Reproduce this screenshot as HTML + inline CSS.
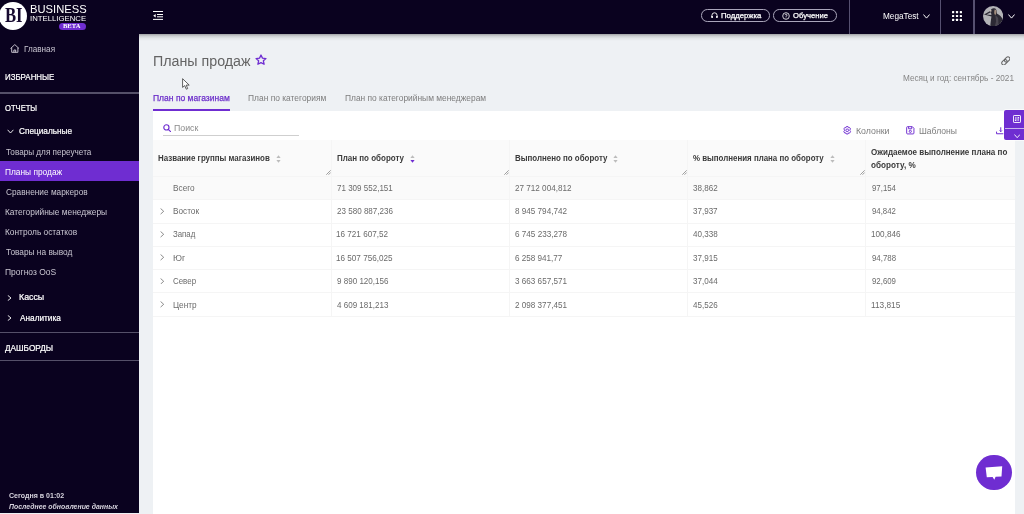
<!DOCTYPE html>
<html lang="ru">
<head>
<meta charset="utf-8">
<title>Планы продаж</title>
<style>
*{box-sizing:border-box;margin:0;padding:0}
html,body{width:1024px;height:514px;overflow:hidden}
body{font-family:'Liberation Sans',sans-serif;background:#eef1f4;position:relative}
.a{position:absolute}
.t{position:absolute;white-space:pre;line-height:1;transform-origin:0 50%}
</style>
</head>
<body>
<!-- backgrounds -->
<div class="a" style="left:139px;top:0;width:885px;height:34px;background:#0a021f"></div>
<div class="a" style="left:139px;top:34px;width:885px;height:7px;background:linear-gradient(180deg,rgba(0,0,0,.33),rgba(0,0,0,.14) 30%,rgba(0,0,0,.05) 62%,rgba(0,0,0,0))"></div>
<div class="a" style="left:0;top:0;width:139px;height:512.8px;background:#0a021f"></div>

<!-- logo -->
<div class="a" style="left:-0.6px;top:2px;width:27.8px;height:27.8px;border-radius:50%;background:#fff"></div>
<div class="a" style="left:58.9px;top:22.8px;width:26.9px;height:7.2px;border-radius:3.6px;background:#6f2dd1"></div>

<!-- home icon -->
<svg class="a" style="left:9.7px;top:44.4px" width="9.6" height="9" viewBox="0 0 9.6 9" fill="none" stroke="#d6d3dd" stroke-width="0.9" stroke-linejoin="round"><path d="M0.5 4.6 L4.8 0.6 L9.1 4.6 M1.7 3.7 V8.3 H7.9 V3.7 M3.9 8.3 V6 H5.7 V8.3"/></svg>

<!-- sidebar separators -->
<div class="a" style="left:0;top:92.4px;width:139px;height:1.2px;background:#555069"></div>
<div class="a" style="left:0;top:331.5px;width:139px;height:1.2px;background:#555069"></div>
<div class="a" style="left:0;top:360.2px;width:139px;height:1.2px;background:#555069"></div>

<!-- active menu item -->
<div class="a" style="left:0;top:160.7px;width:139px;height:20.5px;background:#6f2dd1"></div>

<!-- sidebar chevrons -->
<svg class="a" style="left:6.5px;top:129px" width="7" height="5" viewBox="0 0 7 5" fill="none" stroke="#fff" stroke-width="0.9"><path d="M0.6 0.8 L3.5 4 L6.4 0.8"/></svg>
<svg class="a" style="left:7px;top:295px" width="5" height="6" viewBox="0 0 5 6" fill="none" stroke="#fff" stroke-width="0.9"><path d="M0.8 0.4 L4 3 L0.8 5.6"/></svg>
<svg class="a" style="left:7px;top:315.4px" width="5" height="6" viewBox="0 0 5 6" fill="none" stroke="#fff" stroke-width="0.9"><path d="M0.8 0.4 L4 3 L0.8 5.6"/></svg>

<!-- hamburger -->
<svg class="a" style="left:153px;top:11px" width="10.2" height="9" viewBox="0 0 10.2 9" fill="none" stroke="#fff" stroke-width="1"><path d="M0 0.5 H10.2 M4 3.5 H10.2 M4 5.8 H10.2 M0 8.4 H10.2"/><path d="M0.2 4.65 L2.7 2.9 V6.4 Z" fill="#fff" stroke="none"/></svg>

<!-- top buttons -->
<div class="a" style="left:701.2px;top:9.2px;width:68.4px;height:12.5px;border:1px solid #aaa6bb;border-radius:6.3px"></div>
<svg class="a" style="left:711px;top:12.3px" width="7" height="7" viewBox="0 0 7 7" fill="none" stroke="#fff" stroke-width="0.9"><path d="M0.9 5 V3.4 A2.6 2.6 0 0 1 6.1 3.4 V5"/><path d="M1.1 3.9 V6 M5.9 3.9 V6" stroke-width="1.5"/></svg>
<div class="a" style="left:772.6px;top:9.2px;width:64.4px;height:12.5px;border:1px solid #aaa6bb;border-radius:6.3px"></div>
<svg class="a" style="left:781.7px;top:12px" width="8" height="8" viewBox="0 0 8 8" fill="none" stroke="#fff" stroke-width="0.8"><circle cx="4" cy="4" r="3.3"/><path d="M3 3.2 A1 1 0 1 1 4 4.2 V4.9 M4 5.6 V6.2" stroke-width="0.7"/></svg>

<!-- top separators -->
<div class="a" style="left:848.6px;top:0;width:1.4px;height:34px;background:#565070"></div>
<div class="a" style="left:939.6px;top:0;width:1.4px;height:34px;background:#565070"></div>
<div class="a" style="left:973.4px;top:0;width:1.4px;height:34px;background:#565070"></div>
<svg class="a" style="left:923.3px;top:14.3px" width="7" height="5" viewBox="0 0 7 5" fill="none" stroke="#fff" stroke-width="1"><path d="M0.4 0.5 L3.5 4.1 L6.6 0.5"/></svg>
<svg class="a" style="left:1007.7px;top:14.3px" width="7" height="5" viewBox="0 0 7 5" fill="none" stroke="#fff" stroke-width="1"><path d="M0.4 0.5 L3.5 4.1 L6.6 0.5"/></svg>
<!-- grid icon -->
<svg class="a" style="left:952px;top:10.5px" width="10" height="10" viewBox="0 0 10 10" fill="#fff"><rect x="0" y="0" width="2.2" height="2.2" rx="0.5"/><rect x="3.9" y="0" width="2.2" height="2.2" rx="0.5"/><rect x="7.8" y="0" width="2.2" height="2.2" rx="0.5"/><rect x="0" y="3.9" width="2.2" height="2.2" rx="0.5"/><rect x="3.9" y="3.9" width="2.2" height="2.2" rx="0.5"/><rect x="7.8" y="3.9" width="2.2" height="2.2" rx="0.5"/><rect x="0" y="7.8" width="2.2" height="2.2" rx="0.5"/><rect x="3.9" y="7.8" width="2.2" height="2.2" rx="0.5"/><rect x="7.8" y="7.8" width="2.2" height="2.2" rx="0.5"/></svg>
<!-- avatar -->
<svg class="a" style="left:983.2px;top:5.6px" width="20.2" height="20.2" viewBox="0 0 20 20"><defs><clipPath id="av"><circle cx="10" cy="10" r="10"/></clipPath></defs><g clip-path="url(#av)"><rect width="20" height="20" fill="#b3b3b7"/><path d="M7.2 20 C7.6 16 8 13 8.4 10.4 L1 8.4 L7.6 4.6 C8.2 2.6 9.6 2 11 2.2 C12.8 2.3 13.6 4 13.6 6 L14 7.6 C16.5 8.6 18.6 11 20 14 V20 Z" fill="#2c2934"/><path d="M11.4 3.6 C12.6 3.4 13.3 4.4 13.3 5.6 C13.3 7 12.9 8.3 12.1 8.8 C11.4 8.4 11 7.4 11.1 6 Z" fill="#a08b7c"/><path d="M3.4 8.3 L7.8 6.2 L8.4 8.8 Z" fill="#b3b3b7"/><circle cx="7.6" cy="4.8" r="0.9" fill="#cfc3bb"/><path d="M12.2 9 L13 15 L11.8 20 H15.5 L15 12 Z" fill="#4a4650"/></g></svg>

<!-- title star -->
<svg class="a" style="left:254.6px;top:54px" width="12" height="11.4" viewBox="0 0 11.6 11" fill="none" stroke="#6f2dd1" stroke-width="1.25" stroke-linejoin="round"><path d="M5.8 1 L7.2 4 L10.6 4.4 L8.1 6.6 L8.8 9.9 L5.8 8.3 L2.8 9.9 L3.5 6.6 L1 4.4 L4.4 4 Z"/></svg>
<!-- mouse cursor -->
<svg class="a" style="left:181.6px;top:77.6px" width="8.5" height="12" viewBox="0 0 8.5 12" fill="#fff" stroke="#3a3a3a" stroke-width="0.8" stroke-linejoin="round"><path d="M0.6 0.7 V9.4 L2.7 7.6 L4.3 11.2 L5.7 10.6 L4.2 7.1 H7.2 Z"/></svg>
<!-- link icon -->
<svg class="a" style="left:1000.5px;top:55.5px" width="9.6" height="9.6" viewBox="0 0 9.6 9.6" fill="none" stroke="#666" stroke-width="1.05"><g transform="translate(4.8,4.8) rotate(-45)"><rect x="-5" y="-1.95" width="6.1" height="3.9" rx="1.95"/><rect x="-1.1" y="-1.95" width="6.1" height="3.9" rx="1.95"/></g></svg>

<!-- active tab underline -->
<div class="a" style="left:153px;top:109.3px;width:76.6px;height:1.9px;background:#6f2dd1"></div>

<!-- panel -->
<div class="a" style="left:153px;top:111px;width:862px;height:403px;background:#fff"></div>
<!-- table header bg + first row bg -->
<div class="a" style="left:153px;top:140px;width:862px;height:59.7px;background:#fafafa"></div>
<!-- search -->
<svg class="a" style="left:162.8px;top:123.6px" width="8.6" height="8.6" viewBox="0 0 8.6 8.6" fill="none" stroke="#6f2dd1" stroke-width="1.15"><circle cx="3.4" cy="3.4" r="2.6"/><path d="M5.3 5.3 L8.1 8.1"/></svg>
<div class="a" style="left:163px;top:134.6px;width:136px;height:1px;background:#cfcfcf"></div>
<!-- toolbar icons -->
<svg class="a" style="left:843.3px;top:126.2px" width="8.4" height="8.6" viewBox="0 0 8.4 8.6" fill="none" stroke="#6f2dd1" stroke-width="0.95" stroke-linejoin="round"><path d="M3.3 0.6 H5.1 L5.5 1.7 L6.6 1.5 L7.6 3 L6.9 3.9 V4.7 L7.6 5.6 L6.6 7.1 L5.5 6.9 L5.1 8 H3.3 L2.9 6.9 L1.8 7.1 L0.8 5.6 L1.5 4.7 V3.9 L0.8 3 L1.8 1.5 L2.9 1.7 Z"/><circle cx="4.2" cy="4.3" r="1.35"/></svg>
<svg class="a" style="left:906px;top:126.2px" width="8.6" height="8.6" viewBox="0 0 9 9" fill="none" stroke="#6f2dd1" stroke-width="1" stroke-linejoin="round"><path d="M0.7 1.6 Q0.7 0.7 1.6 0.7 H6.6 L8.3 2.4 V7.4 Q8.3 8.3 7.4 8.3 H1.6 Q0.7 8.3 0.7 7.4 Z"/><path d="M2.7 0.8 V2.9 H6 V0.8"/><circle cx="4.5" cy="5.6" r="1.15"/></svg>
<svg class="a" style="left:995.5px;top:126.6px" width="9.5" height="8" viewBox="0 0 9.5 8" fill="none" stroke="#6f2dd1" stroke-width="1"><path d="M4.75 0.3 V4.6 M3.6 3.5 L4.75 4.7 L5.9 3.5 M0.55 4.6 V6.75 H8.95 V4.6"/></svg>

<!-- table lines -->
<div class="a" style="left:153px;top:176.1px;width:862px;height:0.9px;background:#f5f5f5"></div>
<div class="a" style="left:153px;top:199.3px;width:862px;height:0.9px;background:#f5f5f5"></div>
<div class="a" style="left:153px;top:222.5px;width:862px;height:0.9px;background:#f5f5f5"></div>
<div class="a" style="left:153px;top:245.7px;width:862px;height:0.9px;background:#f5f5f5"></div>
<div class="a" style="left:153px;top:268.9px;width:862px;height:0.9px;background:#f5f5f5"></div>
<div class="a" style="left:153px;top:292.1px;width:862px;height:0.9px;background:#f5f5f5"></div>
<div class="a" style="left:153px;top:315.6px;width:862px;height:0.9px;background:#f5f5f5"></div>
<div class="a" style="left:330.8px;top:140px;width:0.9px;height:176px;background:#f5f5f5"></div>
<div class="a" style="left:508.9px;top:140px;width:0.9px;height:176px;background:#f5f5f5"></div>
<div class="a" style="left:687px;top:140px;width:0.9px;height:176px;background:#f5f5f5"></div>
<div class="a" style="left:865.2px;top:140px;width:0.9px;height:176px;background:#f5f5f5"></div>

<!-- sort icons -->
<svg class="a" style="left:276.2px;top:154.7px" width="5" height="8" viewBox="0 0 4.6 7.8"><path d="M2.3 0.2 L4.4 3 H0.2 Z" fill="#bcbcbc"/><path d="M2.3 7.6 L4.4 4.8 H0.2 Z" fill="#bcbcbc"/></svg>
<svg class="a" style="left:409.7px;top:154.7px" width="5" height="8" viewBox="0 0 4.6 7.8"><path d="M2.3 0.2 L4.4 3 H0.2 Z" fill="#bcbcbc"/><path d="M2.3 7.6 L4.4 4.8 H0.2 Z" fill="#6f2dd1"/></svg>
<svg class="a" style="left:612.6px;top:154.7px" width="5" height="8" viewBox="0 0 4.6 7.8"><path d="M2.3 0.2 L4.4 3 H0.2 Z" fill="#bcbcbc"/><path d="M2.3 7.6 L4.4 4.8 H0.2 Z" fill="#bcbcbc"/></svg>
<svg class="a" style="left:829.6px;top:154.7px" width="5" height="8" viewBox="0 0 4.6 7.8"><path d="M2.3 0.2 L4.4 3 H0.2 Z" fill="#bcbcbc"/><path d="M2.3 7.6 L4.4 4.8 H0.2 Z" fill="#bcbcbc"/></svg>

<!-- resize handles -->
<svg class="a" style="left:325.6px;top:170.4px" width="5" height="5" viewBox="0 0 4.8 4.8" stroke="#7a7a7a" stroke-width="0.7" fill="none"><path d="M0.3 4.5 L4.5 0.3 M2.4 4.5 L4.5 2.4"/></svg>
<svg class="a" style="left:503.7px;top:170.4px" width="5" height="5" viewBox="0 0 4.8 4.8" stroke="#7a7a7a" stroke-width="0.7" fill="none"><path d="M0.3 4.5 L4.5 0.3 M2.4 4.5 L4.5 2.4"/></svg>
<svg class="a" style="left:681.8px;top:170.4px" width="5" height="5" viewBox="0 0 4.8 4.8" stroke="#7a7a7a" stroke-width="0.7" fill="none"><path d="M0.3 4.5 L4.5 0.3 M2.4 4.5 L4.5 2.4"/></svg>
<svg class="a" style="left:860px;top:170.4px" width="5" height="5" viewBox="0 0 4.8 4.8" stroke="#7a7a7a" stroke-width="0.7" fill="none"><path d="M0.3 4.5 L4.5 0.3 M2.4 4.5 L4.5 2.4"/></svg>

<!-- row chevrons -->
<svg class="a" style="left:160px;top:208px" width="4.4" height="6.6" viewBox="0 0 4.4 6.6" fill="none" stroke="#777" stroke-width="0.85"><path d="M0.6 0.5 L3.7 3.3 L0.6 6.1"/></svg>
<svg class="a" style="left:160px;top:231.2px" width="4.4" height="6.6" viewBox="0 0 4.4 6.6" fill="none" stroke="#777" stroke-width="0.85"><path d="M0.6 0.5 L3.7 3.3 L0.6 6.1"/></svg>
<svg class="a" style="left:160px;top:254.4px" width="4.4" height="6.6" viewBox="0 0 4.4 6.6" fill="none" stroke="#777" stroke-width="0.85"><path d="M0.6 0.5 L3.7 3.3 L0.6 6.1"/></svg>
<svg class="a" style="left:160px;top:277.6px" width="4.4" height="6.6" viewBox="0 0 4.4 6.6" fill="none" stroke="#777" stroke-width="0.85"><path d="M0.6 0.5 L3.7 3.3 L0.6 6.1"/></svg>
<svg class="a" style="left:160px;top:301.2px" width="4.4" height="6.6" viewBox="0 0 4.4 6.6" fill="none" stroke="#777" stroke-width="0.85"><path d="M0.6 0.5 L3.7 3.3 L0.6 6.1"/></svg>

<!-- right purple tab -->
<div class="a" style="left:1004.3px;top:109.7px;width:20px;height:30.4px;background:#6f2dd1;border-radius:2px 0 0 2px;box-shadow:0 0 0 0.8px rgba(255,255,255,.85)"></div>
<div class="a" style="left:1005px;top:128.1px;width:19px;height:0.8px;background:#c9b3ee"></div>
<svg class="a" style="left:1012.9px;top:115.2px" width="8" height="8" viewBox="0 0 8 8" fill="none" stroke="#fff" stroke-width="0.9"><rect x="0.5" y="0.5" width="7" height="7" rx="0.6"/><path d="M2.9 1.9 V6 M1.9 4.9 L2.9 6.1 M5.1 6.1 V2 M6.1 3.1 L5.1 1.9"/></svg>
<svg class="a" style="left:1013.8px;top:133.8px" width="6.4" height="4.2" viewBox="0 0 6.4 4.2" fill="none" stroke="#fff" stroke-width="0.9"><path d="M0.4 0.5 L3.2 3.7 L6 0.5"/></svg>

<!-- chat bubble -->
<div class="a" style="left:976.3px;top:454.7px;width:35.4px;height:35.4px;border-radius:50%;background:#6f2dd1"></div>
<svg class="a" style="left:985.2px;top:466.2px" width="18" height="15" viewBox="0 0 18 15" fill="#fff"><path d="M0.6 1.4 L17.2 0.3 L16.5 10.4 L10.6 10.7 L9.3 13.8 L7.6 10.9 L1.8 11.2 Z"/></svg>

<div id="tx" style="position:absolute;left:0;top:0;width:1024px;height:514px;will-change:transform">
<div class="t" style="left:4.91px;top:5px;font-family:'Liberation Serif',serif;font-size:21px;font-weight:bold;color:#170a30;transform:scaleX(0.7926)">BI</div>
<div class="t" style="left:29.82px;top:5px;font-family:'Liberation Sans',sans-serif;font-size:10.4px;color:#fff;transform:scaleX(1.0775)">BUSINESS</div>
<div class="t" style="left:30.21px;top:15px;font-family:'Liberation Sans',sans-serif;font-size:7.6px;color:#fff;transform:scaleX(1.0228)">INTELLIGENCE</div>
<div class="t" style="left:63.33px;top:23px;font-family:'Liberation Serif',serif;font-size:6.2px;font-weight:bold;color:#fff;transform:scaleX(1.0591)">BETA</div>
<div class="t" style="left:24.39px;top:45px;font-family:'Liberation Sans',sans-serif;font-size:8.5px;color:#c9c6d1;transform:scaleX(0.9595)">Главная</div>
<div class="t" style="left:4.93px;top:73px;font-family:'Liberation Sans',sans-serif;font-size:8.7px;color:#fff;-webkit-text-stroke:0.22px #fff;transform:scaleX(0.9088)">ИЗБРАННЫЕ</div>
<div class="t" style="left:5.49px;top:104px;font-family:'Liberation Sans',sans-serif;font-size:8.7px;color:#fff;-webkit-text-stroke:0.22px #fff;transform:scaleX(0.8753)">ОТЧЕТЫ</div>
<div class="t" style="left:19.44px;top:127px;font-family:'Liberation Sans',sans-serif;font-size:8.7px;color:#fff;-webkit-text-stroke:0.22px #fff;transform:scaleX(0.9498)">Специальные</div>
<div class="t" style="left:5.72px;top:148px;font-family:'Liberation Sans',sans-serif;font-size:8.7px;color:#c9c6d1;transform:scaleX(0.9398)">Товары для переучета</div>
<div class="t" style="left:5.39px;top:168px;font-family:'Liberation Sans',sans-serif;font-size:8.7px;color:#fff;transform:scaleX(0.9609)">Планы продаж</div>
<div class="t" style="left:5.61px;top:188px;font-family:'Liberation Sans',sans-serif;font-size:8.7px;color:#c9c6d1;transform:scaleX(0.9533)">Сравнение маркеров</div>
<div class="t" style="left:5.38px;top:208px;font-family:'Liberation Sans',sans-serif;font-size:8.7px;color:#c9c6d1;transform:scaleX(0.9628)">Категорийные менеджеры</div>
<div class="t" style="left:5.39px;top:228px;font-family:'Liberation Sans',sans-serif;font-size:8.7px;color:#c9c6d1;transform:scaleX(0.9603)">Контроль остатков</div>
<div class="t" style="left:5.71px;top:248px;font-family:'Liberation Sans',sans-serif;font-size:8.7px;color:#c9c6d1;transform:scaleX(0.9558)">Товары на вывод</div>
<div class="t" style="left:5.37px;top:268px;font-family:'Liberation Sans',sans-serif;font-size:8.7px;color:#c9c6d1;transform:scaleX(0.9768)">Прогноз OoS</div>
<div class="t" style="left:18.68px;top:293px;font-family:'Liberation Sans',sans-serif;font-size:8.7px;color:#fff;-webkit-text-stroke:0.22px #fff;transform:scaleX(1.0158)">Кассы</div>
<div class="t" style="left:19.54px;top:314px;font-family:'Liberation Sans',sans-serif;font-size:8.7px;color:#fff;-webkit-text-stroke:0.22px #fff;transform:scaleX(0.9497)">Аналитика</div>
<div class="t" style="left:5.39px;top:344px;font-family:'Liberation Sans',sans-serif;font-size:8.7px;color:#fff;-webkit-text-stroke:0.22px #fff;transform:scaleX(0.9469)">ДАШБОРДЫ</div>
<div class="t" style="left:9.07px;top:492px;font-family:'Liberation Sans',sans-serif;font-size:7.8px;font-weight:bold;color:#d8d5df;transform:scaleX(0.9028)">Сегодня в 01:02</div>
<div class="t" style="left:9.15px;top:503px;font-family:'Liberation Sans',sans-serif;font-size:7.8px;font-weight:bold;font-style:italic;color:#d8d5df;transform:scaleX(0.8879)">Последнее обновление данных</div>
<div class="t" style="left:721.06px;top:12px;font-family:'Liberation Sans',sans-serif;font-size:7.4px;color:#fff;-webkit-text-stroke:0.25px #fff;transform:scaleX(1.0472)">Поддержка</div>
<div class="t" style="left:793.38px;top:12px;font-family:'Liberation Sans',sans-serif;font-size:7.4px;color:#fff;-webkit-text-stroke:0.25px #fff;transform:scaleX(1.0342)">Обучение</div>
<div class="t" style="left:883.19px;top:12px;font-family:'Liberation Sans',sans-serif;font-size:9.2px;color:#fff;transform:scaleX(0.8951)">MegaTest</div>
<div class="t" style="left:152.98px;top:54px;font-family:'Liberation Sans',sans-serif;font-size:14px;color:#646464;transform:scaleX(1.0177)">Планы продаж</div>
<div class="t" style="left:903.15px;top:74px;font-family:'Liberation Sans',sans-serif;font-size:8.8px;color:#858585;transform:scaleX(0.9332)">Месяц и год: сентябрь - 2021</div>
<div class="t" style="left:152.97px;top:94px;font-family:'Liberation Sans',sans-serif;font-size:9.3px;color:#6a2cc9;-webkit-text-stroke:0.25px #6a2cc9;transform:scaleX(0.9163)">План по магазинам</div>
<div class="t" style="left:248.13px;top:94px;font-family:'Liberation Sans',sans-serif;font-size:9.3px;color:#7d7d7d;transform:scaleX(0.9057)">План по категориям</div>
<div class="t" style="left:344.89px;top:94px;font-family:'Liberation Sans',sans-serif;font-size:9.3px;color:#7d7d7d;transform:scaleX(0.9029)">План по категорийным менеджерам</div>
<div class="t" style="left:173.86px;top:124px;font-family:'Liberation Sans',sans-serif;font-size:9px;color:#8a8a8a;transform:scaleX(0.9741)">Поиск</div>
<div class="t" style="left:855.75px;top:127px;font-family:'Liberation Sans',sans-serif;font-size:9px;color:#7d7d7d;transform:scaleX(0.9759)">Колонки</div>
<div class="t" style="left:919.12px;top:127px;font-family:'Liberation Sans',sans-serif;font-size:9px;color:#7d7d7d;transform:scaleX(0.9524)">Шаблоны</div>
<div class="t" style="left:158.33px;top:154px;font-family:'Liberation Sans',sans-serif;font-size:9.0px;font-weight:bold;color:#3a3a3a;transform:scaleX(0.8801)">Название группы магазинов</div>
<div class="t" style="left:336.53px;top:154px;font-family:'Liberation Sans',sans-serif;font-size:9.0px;font-weight:bold;color:#3a3a3a;transform:scaleX(0.8871)">План по обороту</div>
<div class="t" style="left:514.53px;top:154px;font-family:'Liberation Sans',sans-serif;font-size:9.0px;font-weight:bold;color:#3a3a3a;transform:scaleX(0.8810)">Выполнено по обороту</div>
<div class="t" style="left:693.31px;top:154px;font-family:'Liberation Sans',sans-serif;font-size:9.0px;font-weight:bold;color:#3a3a3a;transform:scaleX(0.8785)">% выполнения плана по обороту</div>
<div class="t" style="left:871.08px;top:148px;font-family:'Liberation Sans',sans-serif;font-size:9.0px;font-weight:bold;color:#3a3a3a;transform:scaleX(0.8929)">Ожидаемое выполнение плана по</div>
<div class="t" style="left:871.13px;top:161px;font-family:'Liberation Sans',sans-serif;font-size:9.0px;font-weight:bold;color:#3a3a3a;transform:scaleX(0.9067)">обороту, %</div>
<div class="t" style="left:173.09px;top:184px;font-family:'Liberation Sans',sans-serif;font-size:9px;color:#6b6b6b;transform:scaleX(0.9167)">Всего</div>
<div class="t" style="left:336.53px;top:184px;font-family:'Liberation Sans',sans-serif;font-size:9px;color:#6b6b6b;transform:scaleX(0.8918)">71 309 552,151</div>
<div class="t" style="left:514.59px;top:184px;font-family:'Liberation Sans',sans-serif;font-size:9px;color:#6b6b6b;transform:scaleX(0.9029)">27 712 004,812</div>
<div class="t" style="left:692.88px;top:184px;font-family:'Liberation Sans',sans-serif;font-size:9px;color:#6b6b6b;transform:scaleX(0.8960)">38,862</div>
<div class="t" style="left:871.60px;top:184px;font-family:'Liberation Sans',sans-serif;font-size:9px;color:#6b6b6b;transform:scaleX(0.8697)">97,154</div>
<div class="t" style="left:173.10px;top:207px;font-family:'Liberation Sans',sans-serif;font-size:9px;color:#6b6b6b;transform:scaleX(0.9120)">Восток</div>
<div class="t" style="left:336.60px;top:207px;font-family:'Liberation Sans',sans-serif;font-size:9px;color:#6b6b6b;transform:scaleX(0.8953)">23 580 887,236</div>
<div class="t" style="left:514.58px;top:207px;font-family:'Liberation Sans',sans-serif;font-size:9px;color:#6b6b6b;transform:scaleX(0.9033)">8 945 794,742</div>
<div class="t" style="left:692.88px;top:207px;font-family:'Liberation Sans',sans-serif;font-size:9px;color:#6b6b6b;transform:scaleX(0.8933)">37,937</div>
<div class="t" style="left:871.60px;top:207px;font-family:'Liberation Sans',sans-serif;font-size:9px;color:#6b6b6b;transform:scaleX(0.8692)">94,842</div>
<div class="t" style="left:173.26px;top:230px;font-family:'Liberation Sans',sans-serif;font-size:9px;color:#6b6b6b;transform:scaleX(0.8722)">Запад</div>
<div class="t" style="left:336.07px;top:230px;font-family:'Liberation Sans',sans-serif;font-size:9px;color:#6b6b6b;transform:scaleX(0.9036)">16 721 607,52</div>
<div class="t" style="left:514.63px;top:230px;font-family:'Liberation Sans',sans-serif;font-size:9px;color:#6b6b6b;transform:scaleX(0.9043)">6 745 233,278</div>
<div class="t" style="left:692.97px;top:230px;font-family:'Liberation Sans',sans-serif;font-size:9px;color:#6b6b6b;transform:scaleX(0.8962)">40,338</div>
<div class="t" style="left:871.07px;top:230px;font-family:'Liberation Sans',sans-serif;font-size:9px;color:#6b6b6b;transform:scaleX(0.9075)">100,846</div>
<div class="t" style="left:173.04px;top:254px;font-family:'Liberation Sans',sans-serif;font-size:9px;color:#6b6b6b;transform:scaleX(0.9895)">Юг</div>
<div class="t" style="left:336.07px;top:254px;font-family:'Liberation Sans',sans-serif;font-size:9px;color:#6b6b6b;transform:scaleX(0.9036)">16 507 756,025</div>
<div class="t" style="left:514.63px;top:254px;font-family:'Liberation Sans',sans-serif;font-size:9px;color:#6b6b6b;transform:scaleX(0.9013)">6 258 941,77</div>
<div class="t" style="left:692.88px;top:254px;font-family:'Liberation Sans',sans-serif;font-size:9px;color:#6b6b6b;transform:scaleX(0.8967)">37,915</div>
<div class="t" style="left:871.60px;top:254px;font-family:'Liberation Sans',sans-serif;font-size:9px;color:#6b6b6b;transform:scaleX(0.8729)">94,788</div>
<div class="t" style="left:173.29px;top:277px;font-family:'Liberation Sans',sans-serif;font-size:9px;color:#6b6b6b;transform:scaleX(0.8793)">Север</div>
<div class="t" style="left:336.59px;top:277px;font-family:'Liberation Sans',sans-serif;font-size:9px;color:#6b6b6b;transform:scaleX(0.8950)">9 890 120,156</div>
<div class="t" style="left:514.58px;top:277px;font-family:'Liberation Sans',sans-serif;font-size:9px;color:#6b6b6b;transform:scaleX(0.9035)">3 663 657,571</div>
<div class="t" style="left:692.88px;top:277px;font-family:'Liberation Sans',sans-serif;font-size:9px;color:#6b6b6b;transform:scaleX(0.8965)">37,044</div>
<div class="t" style="left:871.60px;top:277px;font-family:'Liberation Sans',sans-serif;font-size:9px;color:#6b6b6b;transform:scaleX(0.8704)">92,609</div>
<div class="t" style="left:173.09px;top:301px;font-family:'Liberation Sans',sans-serif;font-size:9px;color:#6b6b6b;transform:scaleX(0.9173)">Центр</div>
<div class="t" style="left:336.67px;top:301px;font-family:'Liberation Sans',sans-serif;font-size:9px;color:#6b6b6b;transform:scaleX(0.8940)">4 609 181,213</div>
<div class="t" style="left:514.59px;top:301px;font-family:'Liberation Sans',sans-serif;font-size:9px;color:#6b6b6b;transform:scaleX(0.9031)">2 098 377,451</div>
<div class="t" style="left:692.97px;top:301px;font-family:'Liberation Sans',sans-serif;font-size:9px;color:#6b6b6b;transform:scaleX(0.8937)">45,526</div>
<div class="t" style="left:871.05px;top:301px;font-family:'Liberation Sans',sans-serif;font-size:9px;color:#6b6b6b;transform:scaleX(0.9204)">113,815</div>
</div>
</body>
</html>
